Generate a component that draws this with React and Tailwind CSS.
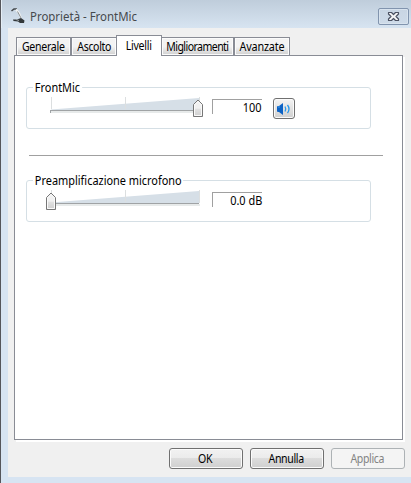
import React from "react";

const tabFace = "h-[19px] border border-[#898c95] bg-gradient-to-b from-[#f3f3f3] from-50% to-[#d3d3d3] to-95% shadow-[inset_0_0_0_1px_#fbfbfb]";

function Tab({ label, className, textClass }) {
  return (
    <div className={"flex shrink-0 items-center justify-center whitespace-nowrap " + className}>
      <span className={textClass}>{label}</span>
    </div>
  );
}

function Slider({ atEnd }) {
  return (
    <svg className="block h-[24px] w-[160px] shrink-0" viewBox="0 0 160 24">
      <path d="M6 13.5L154 2V14H6Z" fill="#d6dfe7" />
      <path d="M6.5 1V13M80.500 1V13M154.500 1V14" stroke="#dcdfe0" />
      <path d="M5 14.500H154" stroke="#a0a3a5" />
      <path d="M5 16H155" stroke="#e7eaea" strokeWidth="2" />
      <path d="M5.500 14V17" stroke="#9fa3a5" />
      <g transform={atEnd ? "translate(147.5 3)" : "translate(0.5 3)"}>
        <path d="M1 5.500L5.500 1L10 5.500V17.500H1Z" fill="url(#thumb)" stroke="#777" strokeLinejoin="round" />
        <path d="M2 6L5.500 2.500L9 6V16.500H2Z" fill="none" stroke="#fafafa" />
      </g>
      <defs>
        <linearGradient id="thumb" x1="0" y1="0" x2="0" y2="1">
          <stop offset="0.5" stopColor="#f1f1f1" />
          <stop offset="0.55" stopColor="#e1e1e1" />
          <stop offset="1" stopColor="#cecece" />
        </linearGradient>
      </defs>
    </svg>
  );
}

function Group({ title, value, atEnd, children }) {
  return (
    <section className="relative ml-[11px] h-[42px] w-[345px] rounded-[3px] border border-[#d5dfe5]">
      <h2 className="absolute -top-[9px] left-[6px] h-[18px] origin-left scale-x-[0.91] whitespace-nowrap bg-white px-[2px] leading-[18px]">{title}</h2>
      <div className="flex pl-[18px] pt-[8px]">
        <Slider atEnd={atEnd} />
        <div className="ml-[7px] mt-[3px] h-[15px] w-[50px] border-l border-t border-[#a0a0a0] text-right leading-[15px]">
          <span className="inline-block origin-right scale-x-[0.91]">{value}</span>
        </div>
        {children}
      </div>
    </section>
  );
}

function Button({ label, disabled }) {
  return (
    <button
      disabled={disabled}
      className={
        "flex h-[21px] w-[74px] items-center justify-center rounded-[3px] border " +
        (disabled
          ? "border-[#adb2b5] bg-[#f4f4f4] text-[#838383]"
          : "border-[#707070] bg-[linear-gradient(#f2f2f2_0%,#ebebeb_48%,#dddddd_49%,#cfcfcf_100%)] shadow-[inset_0_0_0_1px_#fbfbfb]")
      }
    >
      <span className="inline-block scale-x-[0.88] pr-[2px] tracking-[-0.400px]">{label}</span>
    </button>
  );
}

export default function App() {
  return (
    <div className="flex h-[483px] w-[411px] flex-col overflow-hidden border-l border-[#55565b] bg-[#d7e4f2] font-['Noto_Sans','Open_Sans',sans-serif] text-[12px] text-black">
      <header className="flex h-[28px] shrink-0 border-l border-[#e5eef6] bg-gradient-to-b from-[#bfcddb] to-[#d7e4f1]">
        <svg className="ml-[8px] mt-[7px] h-[18px] w-[16px] shrink-0" viewBox="0 0 16 18">
          <path d="M1.500 4L4 2L7 2" fill="none" stroke="#44484b" strokeWidth="1.600" />
          <path d="M6 2.500L9 6L11 11" fill="none" stroke="#f0f2f2" strokeWidth="2" />
          <path d="M7.500 4.500L11 11" stroke="#8a8f92" />
          <path d="M3 12.500L7 12.500L11 11L14.500 13.500L14 16L10 16L8 14.500L3.500 14Z" fill="#33383a" />
          <path d="M6 12.500L9 13.500" stroke="#a0a7aa" />
        </svg>
        <h1 className="ml-[4px] mt-[7px] whitespace-nowrap text-[13px] leading-[19px] text-[#46494d]">
          <span className="inline-block origin-left scale-x-[0.880]">Proprietà - FrontMic</span>
        </h1>
        <button className="ml-auto mr-[2px] mt-[8px] flex h-[17px] w-[31px] items-center justify-center rounded-[2px] border border-[#8194ae] bg-gradient-to-b from-[#c8d5e3] to-[#cedbe9] shadow-[inset_0_0_0_1px_#d8e3ee]">
          <svg className="h-[11px] w-[13px]" viewBox="0 0 13 11">
            <path d="M1.500 1.500H4.500L6.500 3.500L8.500 1.500H11.500V3L9 5.500L11.500 8V9.500H8.500L6.500 7.500L4.500 9.500H1.500V8L4 5.500L1.500 3Z" fill="#f4f5f6" stroke="#4b5162" strokeWidth="1.200" strokeLinejoin="round" />
          </svg>
        </button>
      </header>

      <main className="ml-[7px] flex h-[449px] shrink-0 flex-col bg-[#f0f0f0]">
        <nav className="relative z-10 flex h-[28px] shrink-0 items-end pl-[8px]">
          <Tab label="Generale" textClass="scale-x-[0.880] tracking-[-0.300px]" className={tabFace + " w-[55px]"} />
          <Tab label="Ascolto" textClass="scale-x-[0.880] tracking-[-0.400px]" className={tabFace + " w-[45px] border-r-0"} />
          <Tab label="Livelli" textClass="scale-x-[0.880] tracking-[-0.300px]" className="h-[21px] w-[46px] border-x border-t border-[#898c95] bg-white" />
          <Tab label="Miglioramenti" textClass="scale-x-[0.880] tracking-[-0.640px]" className={tabFace + " w-[72px] border-l-0"} />
          <Tab label="Avanzate" textClass="scale-x-[0.900] tracking-[-0.200px]" className={tabFace + " w-[56px]"} />
        </nav>
        <div className="-mt-px ml-[6px] h-[385px] w-[389px] shrink-0 border border-[#898c95] bg-white pt-[31px] shadow-[2px_2px_0_#fff]">
          <Group title="FrontMic" value="100" atEnd>
            <button className="ml-[11px] mt-[2px] flex h-[21px] w-[22px] items-center justify-center rounded-[3px] border border-[#707070] bg-gradient-to-b from-[#f4f4f4] to-[#d0d0d0] shadow-[inset_0_0_0_1px_#fbfbfb]">
              <svg className="h-[14px] w-[16px]" viewBox="0 0 16 14">
                <path d="M1 5Q1 4 2 4H3L7 1V13L3 10H2Q1 10 1 9Z" fill="#0c62c5" />
                <path d="M2 5H4" stroke="#3f9be8" />
                <path d="M9 4.500Q10.500 7 9 9.500M11.500 3Q14.500 7 11.500 11" fill="none" stroke="#2897ea" strokeWidth="1.300" />
              </svg>
            </button>
          </Group>
          <div className="ml-[14px] mt-[26px] h-px w-[354px] bg-[#a0a0a0]" />
          <div className="h-[24px]" />
          <Group title="Preamplificazione microfono" value="0.0 dB" />
        </div>
        <footer className="mt-[8px] flex gap-[7px] pl-[161px]">
          <Button label="OK" />
          <Button label="Annulla" />
          <Button label="Applica" disabled />
        </footer>
      </main>
    </div>
  );
}
